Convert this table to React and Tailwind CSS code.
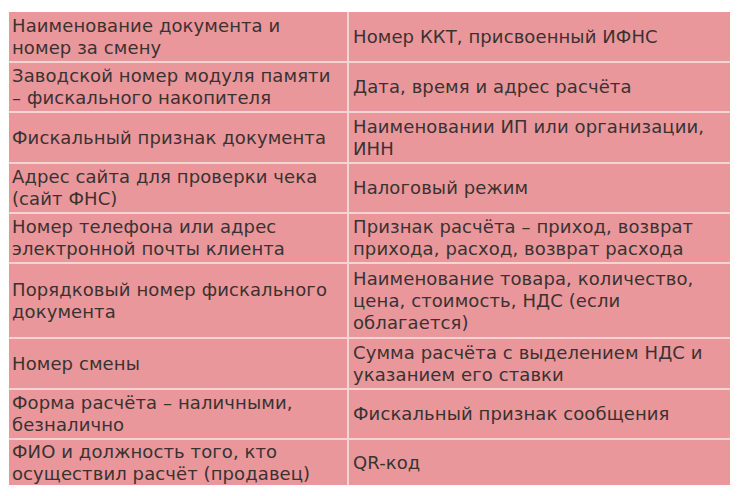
import React from 'react';

const rows = [
  { h: 'h-[49px]', left: 'Наименование документа и номер за смену', right: 'Номер ККТ, присвоенный ИФНС' },
  { h: 'h-[50px]', left: 'Заводской номер модуля памяти – фискального накопителя', right: 'Дата, время и адрес расчёта' },
  { h: 'h-[51px]', left: 'Фискальный признак документа', right: 'Наименовании ИП или организации, ИНН' },
  { h: 'h-[50px]', left: 'Адрес сайта для проверки чека (сайт ФНС)', right: 'Налоговый режим' },
  { h: 'h-[50px]', left: 'Номер телефона или адрес электронной почты клиента', right: 'Признак расчёта – приход, возврат прихода, расход, возврат расхода' },
  { h: 'h-[75px]', left: 'Порядковый номер фискального документа', right: 'Наименование товара, количество, цена, стоимость, НДС (если облагается)' },
  { h: 'h-[51px]', left: 'Номер смены', right: 'Сумма расчёта с выделением НДС и указанием его ставки' },
  { h: 'h-[50px]', left: 'Форма расчёта – наличными, безналично', right: 'Фискальный признак сообщения' },
  { h: 'h-[47px]', left: 'ФИО и должность того, кто осуществил расчёт (продавец)', right: 'QR-код' },
];

function App() {
  return (
    <div className="w-[742px] h-[496px] bg-white pt-[12px] pl-[9px] font-['DejaVu_Sans',sans-serif] text-[18px] leading-[22px] tracking-[0.1px] text-[#3a3232]">
      <div className="w-[721px] bg-[#e9979a]">
        {rows.map((row, i) => (
          <div
            key={i}
            className={`flex ${row.h} ${i > 0 ? 'border-t-2 border-[#f4d4d4]' : ''}`}
          >
            <div className="w-[338px] flex items-center pl-[3px] pr-1">{row.left}</div>
            <div className="flex-1 flex items-center pl-[4px] pr-1 border-l-2 border-[#f4d4d4]">
              {row.right}
            </div>
          </div>
        ))}
      </div>
    </div>
  );
}

export default App;
